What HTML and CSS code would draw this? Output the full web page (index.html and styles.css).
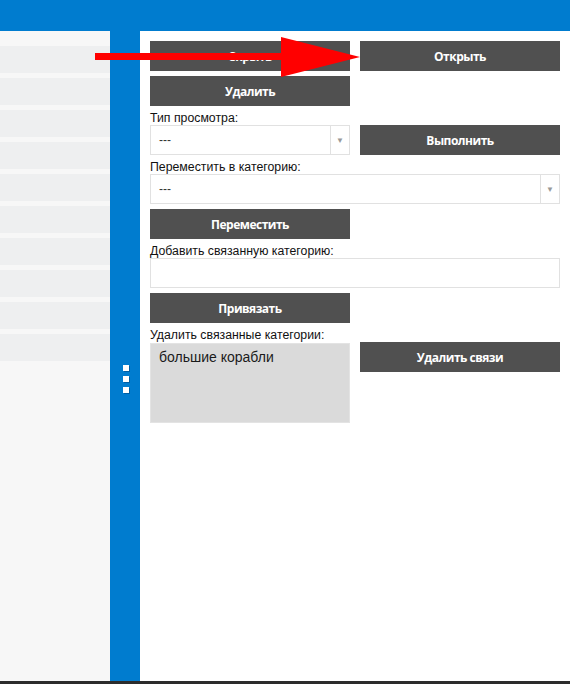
FILE: index.html
```html
<!DOCTYPE html>
<html lang="ru">
<head>
<meta charset="utf-8">
<title>Категории</title>
<link rel="stylesheet" href="styles.css">
</head>
<body>
<div class="app">
  <header class="topbar"></header>
  <main class="main">
    <aside class="list">
      <div class="row"></div><div class="row"></div><div class="row"></div><div class="row"></div><div class="row"></div>
      <div class="row"></div><div class="row"></div><div class="row"></div><div class="row"></div><div class="row"></div>
    </aside>
    <div class="splitter">
      <div class="grip"><span></span><span></span><span></span></div>
    </div>
    <section class="panel">
      <div class="pair">
        <button class="btn">Скрыть</button>
        <button class="btn">Открыть</button>
      </div>
      <div class="pair">
        <button class="btn">Удалить</button>
      </div>
      <label class="lbl">Тип просмотра:</label>
      <div class="pair">
        <div class="select"><span class="val">---</span><span class="drop">▼</span></div>
        <button class="btn">Выполнить</button>
      </div>
      <label class="lbl">Переместить в категорию:</label>
      <div class="select wide"><span class="val">---</span><span class="drop">▼</span></div>
      <div class="pair">
        <button class="btn">Переместить</button>
      </div>
      <label class="lbl">Добавить связанную категорию:</label>
      <div class="input"></div>
      <div class="pair">
        <button class="btn">Привязать</button>
      </div>
      <label class="lbl">Удалить связанные категории:</label>
      <div class="pair top">
        <div class="listbox">большие корабли</div>
        <button class="btn">Удалить связи</button>
      </div>
    </section>
  </main>
  <footer class="bottombar"></footer>
  <svg class="arrow" width="270" height="44" viewBox="0 0 270 44">
    <rect x="0" y="16" width="190" height="7" fill="#ff0000"/>
    <polygon points="186,0 186,40 265,20" fill="#ff0000"/>
  </svg>
</div>
</body>
</html>
```
FILE: styles.css
```css
* { box-sizing: border-box; }
html, body { margin: 0; padding: 0; }
body {
  width: 570px;
  height: 684px;
  overflow: hidden;
  background: #ffffff;
  font-family: "Liberation Sans", Arial, sans-serif;
}
.app {
  position: relative;
  display: flex;
  flex-direction: column;
  height: 684px;
}
.topbar {
  height: 31px;
  background: #007ccf;
  flex: none;
}
.main {
  flex: 1;
  display: flex;
  min-height: 0;
}
.bottombar {
  height: 3px;
  background: #2c2c2c;
  flex: none;
}
.list {
  width: 110px;
  background: #f7f7f7;
  padding-top: 15px;
  display: flex;
  flex-direction: column;
  gap: 5px;
}
.row {
  height: 27px;
  background: #eeeff0;
}
.splitter {
  width: 30px;
  background: #007ccf;
  display: flex;
  justify-content: center;
  padding-top: 334px;
  padding-left: 1px;
}
.grip {
  display: flex;
  flex-direction: column;
  gap: 5px;
}
.grip span {
  width: 6px;
  height: 6px;
  background: #ffffff;
  box-shadow: 1px 1px 0 rgba(0, 40, 80, 0.35);
}
.panel {
  width: 430px;
  padding: 10px 10px 0 10px;
  display: flex;
  flex-direction: column;
}
.pair {
  display: grid;
  grid-template-columns: 200px 200px;
  column-gap: 10px;
  margin-bottom: 5px;
}
.pair.top { align-items: start; }
.btn {
  height: 30px;
  border: 0;
  margin: 0;
  padding: 0;
  background: #505050;
  color: #ffffff;
  font-family: "Open Sans", "Liberation Sans", sans-serif;
  font-weight: 700;
  font-size: 12px;
  letter-spacing: -0.5px;
}
.lbl {
  display: block;
  height: 19px;
  margin-top: -5px;
  padding-top: 5px;
  font-size: 12.3px;
  line-height: 14px;
  color: #111111;
}
.select {
  height: 30px;
  border: 1px solid #e1e1e1;
  display: flex;
  align-items: center;
  background: #ffffff;
}
.select.wide { width: 410px; margin-bottom: 5px; }
.select .val {
  flex: 1;
  padding-left: 8px;
  font-size: 12px;
  color: #333333;
}
.select .drop {
  width: 19px;
  align-self: stretch;
  border-left: 1px solid #e1e1e1;
  display: flex;
  align-items: center;
  justify-content: center;
  font-size: 8px;
  color: #999999;
}
.input {
  width: 410px;
  height: 30px;
  border: 1px solid #e1e1e1;
  margin-bottom: 5px;
}
.listbox {
  height: 80px;
  margin-top: 1px;
  background: #dadada;
  border: 1px solid #e3e3e3;
  padding: 5px 8px;
  font-size: 14px;
  line-height: 17px;
  color: #1a1a1a;
}
.arrow {
  position: absolute;
  left: 95px;
  top: 37px;
}
```
